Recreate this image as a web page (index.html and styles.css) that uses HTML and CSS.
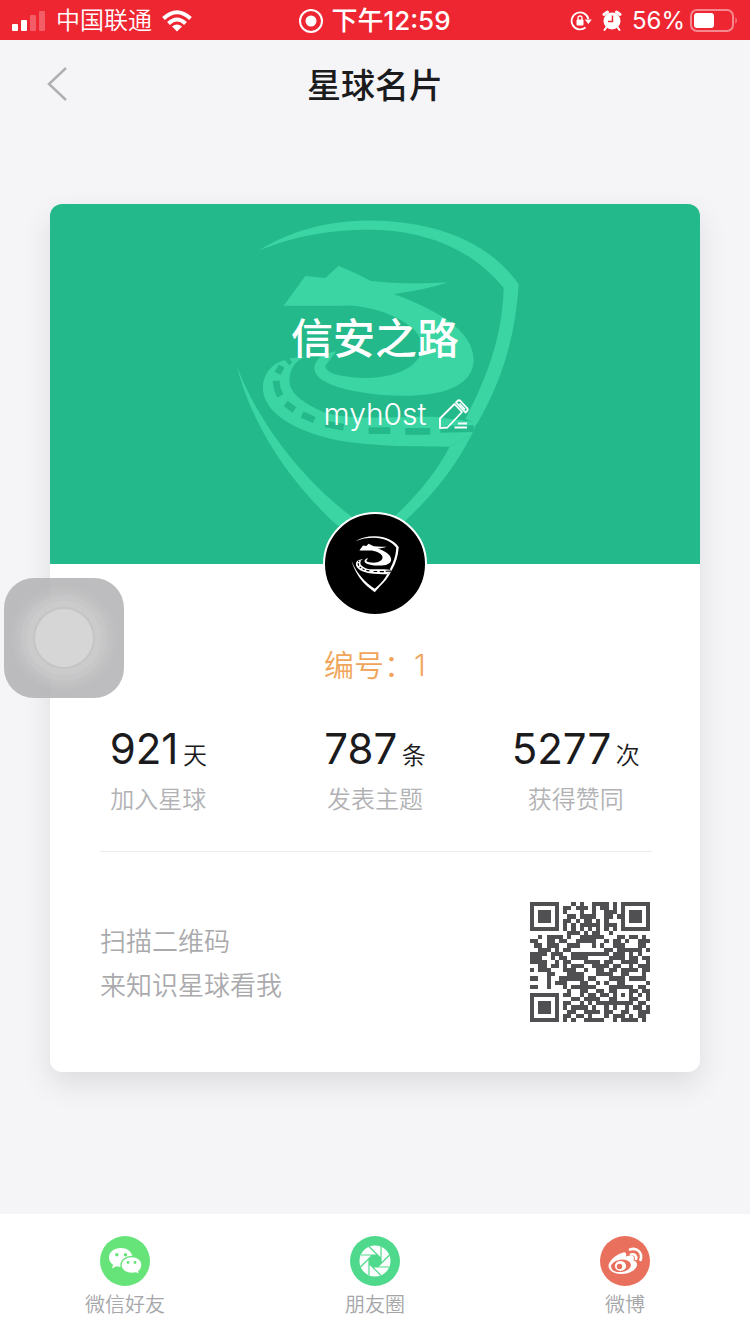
FILE: index.html
```html
<!DOCTYPE html>
<html lang="zh-CN">
<head>
<meta charset="utf-8">
<meta name="viewport" content="width=device-width, initial-scale=1">
<title>星球名片</title>
<link rel="stylesheet" href="styles.css">
</head>
<body>
<svg class="defs" aria-hidden="true">
  <symbol id="shield" viewBox="70 45 860 1020">
    <path fill="currentColor" d="M148 138C250 75 370 47 500 50C690 55 840 120 925 240C915 400 875 530 800 660L765 645C830 520 876 400 880 252C790 140 650 78 480 77C350 77 250 98 148 138Z"/>
    <path fill="currentColor" d="M220 305L285 216L345 222L385 185L440 210L480 230C560 240 630 240 712 235C650 256 590 264 550 270C670 315 790 375 790 470C785 550 690 575 580 575C450 575 315 545 312 495C312 465 340 448 378 442L345 485C345 510 400 520 470 522C570 520 640 480 635 420C625 350 480 300 400 305Z"/>
    <path fill="currentColor" d="M285 460C195 460 155 500 158 560C168 640 280 690 400 712C500 728 620 728 718 728L785 690L800 655L670 638C520 638 400 650 330 620C265 590 232 560 238 520C242 490 255 470 285 460Z"/>
    <g class="road-line" fill="none" stroke-width="20">
      <path d="M240 468L230 476M214 486L202 508M197 530Q199 556 210 576M226 598L252 618M275 632L312 648M345 660L400 670M475 680H540M585 682H660M690 676L790 674"/>
    </g>
    <path fill="currentColor" d="M78 482C140 650 270 820 420 935L495 990L555 935C625 870 680 800 718 728L785 690C735 790 670 870 590 945L495 1050L370 955C240 830 130 680 78 482Z"/>
  </symbol>
</svg>

<div class="status">
  <div class="status-group">
    <svg class="signal" viewBox="0 0 34 22"><g fill="#fff"><rect x="0" y="14" width="6" height="7" rx="1"/><rect x="9" y="10" width="6" height="11" rx="1"/><g opacity=".25"><rect x="18" y="5" width="6" height="16" rx="1"/><rect x="27" y="1" width="6" height="20" rx="1"/></g></g></svg>
    <span>中国联通</span>
    <svg class="wifi" viewBox="0 0 30 22"><g fill="none" stroke="#fff" stroke-width="4"><path d="M1.500 8.500Q15-4 28.500 8.500"/><path d="M6.500 13.500Q15 5.500 23.500 13.500"/></g><path fill="#fff" d="M10 16.500Q15 12.500 20 16.500L15 21.500Z"/></svg>
  </div>
  <div class="status-group status-time">
    <svg class="record" viewBox="0 0 24 24"><circle cx="12" cy="12" r="11" fill="none" stroke="#fff" stroke-width="2"/><circle cx="12" cy="12" r="5.500" fill="#fff"/></svg>
    <span>下午12:59</span>
  </div>
  <div class="status-group status-end">
    <svg class="lock" viewBox="0 0 22 20"><path d="M15.500 16.500A8.500 8.500 0 1 1 18.400 8" fill="none" stroke="#fff" stroke-width="1.800"/><path d="M14.800 8.500h7L18.300 13Z" fill="#fff"/><rect x="6.500" y="8.500" width="7" height="6" rx="1" fill="#fff"/><path d="M8 9V7a2 2 0 0 1 4 0v2" fill="none" stroke="#fff" stroke-width="1.300"/></svg>
    <svg class="alarm" viewBox="0 0 20 22"><g stroke="#fff" stroke-linecap="round" fill="none"><path d="M2 4.500L5.500 2M18 4.500L14.500 2" stroke-width="3"/><path d="M4.500 17L2.500 20M15.500 17l2 3" stroke-width="2"/></g><circle cx="10" cy="11" r="8.500" fill="#fff"/><path d="M10.500 5.500V11.500H6" fill="none" stroke="#ee2632" stroke-width="1.500"/></svg>
    <div class="power">
      <span>56%</span>
      <svg class="battery" viewBox="0 0 48 24"><rect x="1" y="1" width="42" height="21" rx="6" fill="none" stroke="#fff" stroke-opacity=".45" stroke-width="2"/><rect x="4" y="4" width="20" height="15" rx="3" fill="#fff"/><path d="M45.500 8Q48 11.500 45.500 15Z" fill="#fff" opacity=".5"/></svg>
    </div>
  </div>
</div>

<header class="nav">
  <button class="back" type="button" aria-label="返回"><svg viewBox="0 0 22 36"><path d="M20 2L3 18L20 34" fill="none" stroke="#b0b0b2" stroke-width="2.500"/></svg></button>
  <h1>星球名片</h1>
</header>

<main class="card">
  <section class="cover">
    <svg class="watermark" aria-hidden="true"><use href="#shield"/></svg>
    <h2>信安之路</h2>
    <div class="user">
      <span>myh0st</span>
      <button class="edit" type="button" aria-label="编辑"><svg viewBox="0 0 30 30"><g fill="none" stroke="#fff" stroke-width="1.800" stroke-linejoin="round"><path d="M1 29V19.500L15.500 5L23 13L8.500 28.500Z"/><path d="M18.500 2Q20 .5 21.500 2L28 9Q29.500 10.500 28 12L26.500 13.500L17 3.500Z"/><path d="M20.500 4.500L26 10.500M19 24.500h9M15.500 28.500H28"/></g></svg></button>
    </div>
  </section>
  <div class="avatar"><svg aria-hidden="true"><use href="#shield"/></svg></div>
  <p class="serial">编号：1</p>
  <ul class="stats">
    <li><strong>921</strong> <span>天</span><small>加入星球</small></li>
    <li><strong>787</strong> <span>条</span><small>发表主题</small></li>
    <li><strong>5277</strong> <span>次</span><small>获得赞同</small></li>
  </ul>
  <section class="scan">
    <p>扫描二维码<br>来知识星球看我</p>
    <svg class="qr" viewBox="0 0 29 29" role="img" aria-label="二维码" shape-rendering="crispEdges"><path id="qr-cells" fill="#505052"/></svg>
  </section>
</main>

<button class="assist" type="button" aria-label="辅助触控"><span></span></button>

<footer class="share">
  <button type="button">
    <svg viewBox="0 0 50 50"><circle cx="25" cy="25" r="25" fill="#66e479"/><path fill="#fff" d="M21 12C14 12 9 16 9 21.500C9 24.500 10.500 27 13 28.800L12 32.500L16.500 30.200Q19 31 22 30.800C32 30 33 24 32.500 20C31 15 27 12 21 12Z"/><path fill="#fff" stroke="#66e479" stroke-width="1.300" d="M32 20.500C25.500 20.500 21 24.500 21 29C21 34 25.500 37.500 32 37.500Q34 37.500 36 37L39.500 38.800L38.700 35.700Q42 33 42 29C42 24.500 38 20.500 32 20.500Z"/><g fill="#66e479"><circle cx="16.800" cy="18.800" r="1.700"/><circle cx="25.500" cy="18.800" r="1.700"/><circle cx="28" cy="26.500" r="1.400"/><circle cx="35" cy="26.500" r="1.400"/></g></svg>
    <span>微信好友</span>
  </button>
  <button type="button">
    <svg viewBox="0 0 50 50"><circle cx="25" cy="25" r="25" fill="#4fd98c"/><circle cx="25" cy="25" r="15.500" fill="#fff"/><path fill="#4fd98c" d="M22.500 19h5L31 22.500v5L27.500 31h-5L19 27.500v-5Z"/><path fill="none" stroke="#4fd98c" stroke-width="1.200" d="M31 27.500V11M27.500 31L39.500 19M22.500 31H39M19 27.500L31 39.500M19 22.500V39M22.500 19L10.500 31M27.500 19H11M31 22.500L19 10.500"/></svg>
    <span>朋友圈</span>
  </button>
  <button type="button">
    <svg viewBox="0 0 50 50"><circle cx="25" cy="25" r="25" fill="#e9705c"/><path fill="#fff" d="M22 17C25 15 27 17 26 20.500C29.500 19 33.500 19 34 21.500Q34.200 23 33.500 24.500C36 25.200 37.500 27 37 29.500C36 34 29.500 38 21.500 38C14 38 8.500 34.500 8.500 29.800C8.500 25.500 16 18.500 22 17Z"/><ellipse cx="21" cy="29.800" rx="10" ry="6.200" transform="rotate(-8 21 29.800)" fill="#e9705c"/><ellipse cx="20.500" cy="30" rx="5.600" ry="5" fill="#fff"/><circle cx="19.500" cy="30.500" r="2.700" fill="#e9705c"/><g fill="none" stroke="#fff" stroke-width="2.600" stroke-linecap="round"><path d="M30 13.500C37 11 43 17 40.500 24"/><path d="M31 18.500C34.500 17.500 37 20 36 23"/></g></svg>
    <span>微博</span>
  </button>
</footer>
<script src="qr.js"></script>
</body>
</html>
```

FILE: styles.css
```css
* { box-sizing: border-box; margin: 0; padding: 0; }

body {
  min-height: 100vh;
  display: flex;
  flex-direction: column;
  position: relative;
  background: #f5f5f8;
  color: #1b1b1d;
  font-family: Inter, "Noto Sans CJK SC", sans-serif;
}

button { border: 0; background: none; font: inherit; color: inherit; }
svg { display: block; }
.defs { position: absolute; width: 0; height: 0; }
.road-line { stroke: var(--road); }

.status {
  display: grid;
  grid-template-columns: 1fr auto 1fr;
  align-items: center;
  height: 40px;
  padding: 0 12px;
  background: #ee2632;
  color: #fff;
  font-size: 24px;
  line-height: 42px;
}
.status-group { display: flex; align-items: center; gap: 10px; font-weight: 350; }
.status-time { gap: 8px; font-size: 26px; font-weight: 500; }
.status-end { justify-content: flex-end; font-weight: 400; }
.power { display: flex; align-items: center; gap: 5px; }
.signal { width: 34px; height: 22px; }
.wifi { width: 30px; height: 22px; }
.record { width: 24px; height: 24px; }
.lock { width: 22px; height: 20px; }
.alarm { width: 20px; height: 22px; }
.battery { width: 48px; height: 24px; }

.nav {
  display: grid;
  grid-template-columns: 1fr auto 1fr;
  align-items: center;
  height: 88px;
  padding: 0 46px;
}
.nav h1 { padding-top: 4px; font-size: 34px; font-weight: 500; line-height: 48px; }
.back { justify-self: start; }
.back svg { width: 22px; height: 36px; }

.card {
  margin: 76px 50px 48px;
  border-radius: 12px;
  background: #fff;
  box-shadow: 0 12px 30px rgba(0, 0, 0, .1);
}
.cover {
  position: relative;
  height: 360px;
  padding-top: 104px;
  border-radius: 12px 12px 0 0;
  background: #24b98a;
  color: #fff;
  text-align: center;
}
.watermark {
  position: absolute;
  top: 15px;
  left: 50%;
  width: 288px;
  height: 340px;
  margin-left: -142px;
  color: #3bd5a3;
  --road: #24b98a;
}
.cover h2 { position: relative; font-size: 42px; font-weight: 500; line-height: 62px; }
.user {
  position: relative;
  display: flex;
  justify-content: center;
  align-items: center;
  gap: 12px;
  margin-top: 22px;
  padding-left: 42px;
  font-size: 30px;
  font-weight: 300;
  line-height: 44px;
}
.edit svg { width: 30px; height: 30px; }

.avatar {
  position: relative;
  display: grid;
  place-items: center;
  width: 104px;
  height: 104px;
  margin: -52px auto 0;
  border: 2px solid #fff;
  border-radius: 50%;
  background: #000;
  color: #fff;
  --road: #000;
}
.avatar svg { width: 48px; height: 57px; }
.serial {
  margin-top: 28px;
  color: #f0a55b;
  font-size: 30px;
  font-weight: 350;
  line-height: 42px;
  text-align: center;
}
.stats {
  display: grid;
  grid-template-columns: repeat(3, 1fr);
  margin-top: 35px;
  list-style: none;
  text-align: center;
}
.stats li:last-child { padding-right: 32px; }
.stats strong { font-size: 42px; font-weight: 400; line-height: 56px; }
.stats span { font-size: 24px; font-weight: 350; }
.stats small { display: block; margin-top: 4px; color: #b2b2b5; font-size: 24px; font-weight: 350; line-height: 38px; }

.scan {
  display: flex;
  justify-content: space-between;
  align-items: center;
  margin: 32px 48px 0 50px;
  padding: 50px 2px 50px 0;
  border-top: 1px solid #ececee;
  color: #aaaaad;
  font-size: 26px;
  font-weight: 350;
  line-height: 44px;
}
.scan p { padding-top: 4px; }
.qr { width: 120px; height: 120px; }

.assist {
  position: absolute;
  top: 578px;
  left: 4px;
  display: grid;
  place-items: center;
  width: 120px;
  height: 120px;
  border-radius: 30px;
  background: radial-gradient(circle, rgba(196, 196, 197, .94) 36px, rgba(178, 178, 180, .86) 54px);
}
.assist span {
  width: 58px;
  height: 58px;
  border-radius: 50%;
  background: #d6d6d7;
  box-shadow: 0 0 0 2px #c5c5c6, 0 0 0 8px #cbcbcc, 0 0 0 14px rgba(200, 200, 201, .6);
}

.share {
  display: grid;
  grid-template-columns: repeat(3, 1fr);
  margin-top: auto;
  padding: 22px 0 14px;
  background: #fff;
}
.share button {
  display: flex;
  flex-direction: column;
  align-items: center;
  gap: 4px;
  color: #a6a6a9;
  font-size: 20px;
  font-weight: 350;
  line-height: 30px;
}
.share svg { width: 50px; height: 50px; }
```

FILE: qr.js
```js
const rows = [
  "11111110001010011110101111111",
  "10000010110111010110101000001",
  "10111010100010010011101011101",
  "10111010011011110011011011101",
  "10111010110101101010001011101",
  "10000010101011111011101000001",
  "11111110101010101010101111111",
  "00000000011101011001000000000",
  "00101111010011111100011011010",
  "11001101100111110010110100111",
  "01101110011100010100111000110",
  "00111010110000000011011111101",
  "11110111001111111110111010100",
  "11100101101111000001111011011",
  "11110010110001111011001111001",
  "00110110101110011110110010111",
  "10111000111001001101101111011",
  "00001100011110001111001100010",
  "11001001111110110001111011110",
  "00001011100011001010011000001",
  "11001000101111110001111110110",
  "00000000010011001101100011011",
  "11111110110010110110101010101",
  "10000010001101111001100011001",
  "10111010110010101111111110110",
  "10111010101111010010100101101",
  "10111010011001111011001100111",
  "10000010110110100010111010110",
  "11111110101001111100101111010"
];

document.getElementById("qr-cells").setAttribute(
  "d",
  rows.map((row, y) =>
    [...row].map((cell, x) => (cell === "1" ? `M${x} ${y}h1v1h-1z` : "")).join("")
  ).join("")
);
```
